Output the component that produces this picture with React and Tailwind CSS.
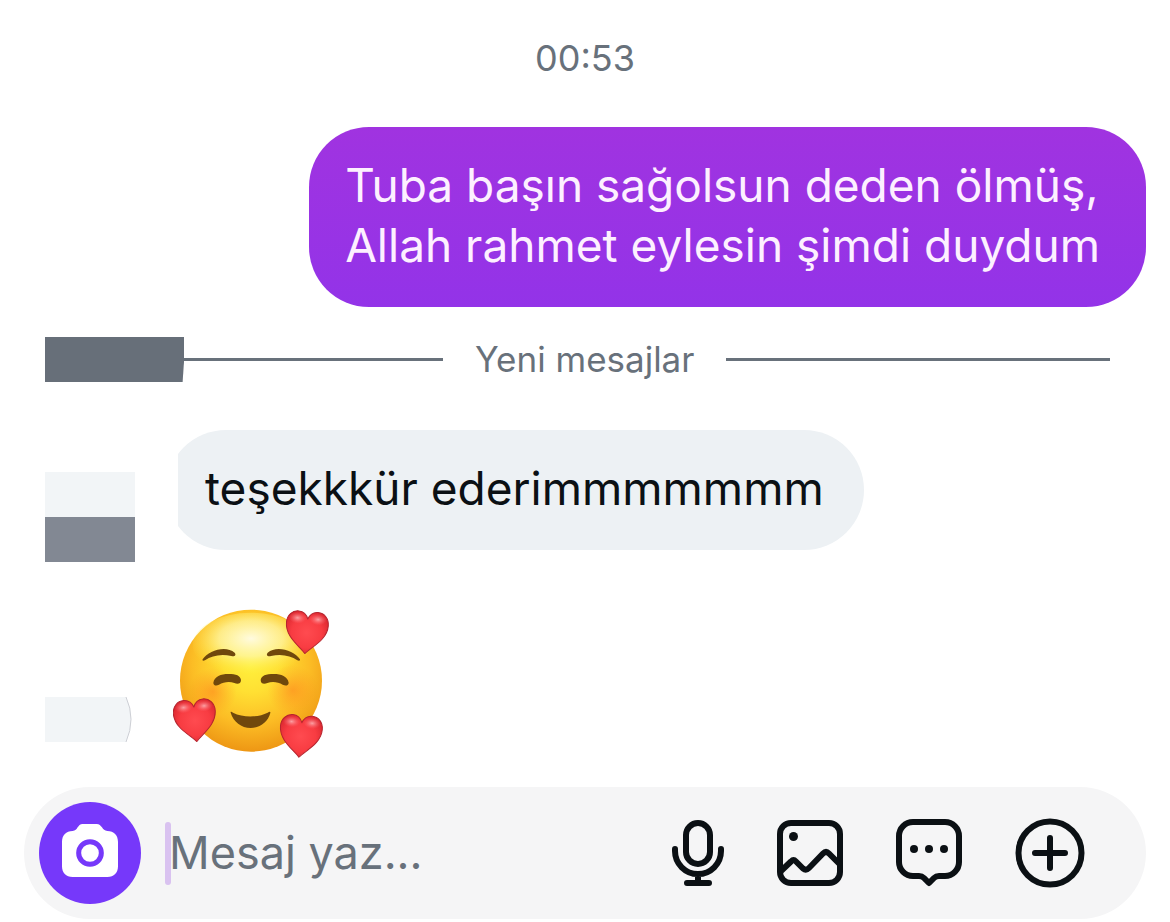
import React, { useState } from 'react';

const Heart = ({ x, y, rotate }) => (
    <g transform={`translate(${x} ${y}) rotate(${rotate} 65 65)`}>
        <path
            d="M65 129C48 108 2 84 2 40C2 18 17 3 36 3C50 3 60 11 65 25C70 11 80 3 94 3C113 3 128 18 128 40C128 84 82 108 65 129Z"
            fill="url(#heart)"
            stroke="#b5242e"
            strokeWidth="3"
            strokeLinejoin="round"
        />
        <ellipse cx="34" cy="24" rx="26" ry="17" fill="url(#heartShine)" />
        <ellipse cx="96" cy="24" rx="26" ry="17" fill="url(#heartShine)" />
    </g>
);

const HeartsEmoji = () => (
    <svg viewBox="39 54 471 453" className="w-[157px] h-[151px]" role="img" aria-label="🥰">
        <defs>
            <radialGradient id="face" gradientUnits="userSpaceOnUse" cx="273" cy="225" r="270">
                <stop offset="0" stopColor="#fff03c" />
                <stop offset="0.3" stopColor="#ffe033" />
                <stop offset="0.65" stopColor="#fcbd25" />
                <stop offset="1" stopColor="#ec9212" />
            </radialGradient>
            <radialGradient id="faceShine" cx="0.5" cy="0.4" r="0.55">
                <stop offset="0" stopColor="#fffce8" stopOpacity="0.95" />
                <stop offset="0.5" stopColor="#fff9b0" stopOpacity="0.7" />
                <stop offset="1" stopColor="#fff04a" stopOpacity="0" />
            </radialGradient>
            <radialGradient id="blush">
                <stop offset="0" stopColor="#ff7a1c" stopOpacity="0.5" />
                <stop offset="1" stopColor="#ff8a1c" stopOpacity="0" />
            </radialGradient>
            <radialGradient id="heart" cx="0.5" cy="0.5" r="0.6">
                <stop offset="0" stopColor="#ff4b50" />
                <stop offset="0.6" stopColor="#f83c42" />
                <stop offset="1" stopColor="#d9272f" />
            </radialGradient>
            <radialGradient id="heartShine">
                <stop offset="0" stopColor="#ffc4c6" stopOpacity="0.75" />
                <stop offset="1" stopColor="#ff7078" stopOpacity="0" />
            </radialGradient>
        </defs>
        <circle cx="273" cy="272" r="213" fill="url(#face)" />
        <ellipse cx="273" cy="165" rx="175" ry="97" fill="url(#faceShine)" />
        <circle cx="158" cy="305" r="72" fill="url(#blush)" />
        <circle cx="398" cy="300" r="76" fill="url(#blush)" />
        <g fill="#70480c">
            <path d="M128 208C145 181 198 165 224 188C230 196 223 201 214 198C180 191 155 198 135 211C129 213 126 212 128 208Z" />
            <path d="M420 208C403 181 349 165 323 188C317 196 324 201 333 198C367 191 392 198 412 211C418 213 421 212 420 208Z" />
            <path d="M160 278C163 259 183 252 205 252C229 252 241 257 243 270C243 283 231 283 223 279C208 273 190 276 177 284C168 289 160 286 160 278Z" />
            <path d="M386 278C383 259 363 252 342 252C317 252 304 257 302 270C302 283 314 283 322 279C337 273 355 276 368 284C378 289 386 286 386 278Z" />
            <path d="M212 368C211 364 215 365 219 368C249 383 293 383 323 368C328 365 332 364 331 369C324 396 300 414 272 414C244 414 220 395 212 368Z" />
        </g>
        <Heart x={375} y={62} rotate={5} />
        <Heart x={40} y={326} rotate={-5} />
        <Heart x={357} y={373} rotate={5} />
    </svg>
);

const CameraIcon = () => (
    <svg viewBox="0 0 168 159" className="w-14 h-[53px]" aria-hidden="true">
        <path
            fill="#fff"
            d="M62 0H104C120 0 120 20 136 21C156 21 168 34 168 53V127C168 147 156 159 136 159H32C12 159 0 147 0 127V53C0 34 12 21 32 21C48 20 46 0 62 0Z"
        />
        <circle cx="84" cy="87" r="34" fill="none" stroke="#7638fa" strokeWidth="15" />
    </svg>
);

const strokeProps = {
    fill: 'none',
    stroke: 'currentColor',
    strokeWidth: 6,
    strokeLinecap: 'round',
    strokeLinejoin: 'round',
    'aria-hidden': true,
};

const MicIcon = () => (
    <svg viewBox="0 0 52 66" className="w-[52px] h-[66px]" {...strokeProps}>
        <rect x="14" y="3" width="24" height="41" rx="12" />
        <path d="M3 29v2a23 23 0 0 0 46 0v-2M26 54v9M15 63h22" />
    </svg>
);

const ImageIcon = () => (
    <svg viewBox="0 0 66 66" className="w-[66px] h-[66px]" {...strokeProps}>
        <rect x="3" y="3" width="60" height="60" rx="11" />
        <circle cx="16.5" cy="16.5" r="4.5" fill="currentColor" stroke="none" />
        <path d="M4 51L14 41.5Q16.500 39 19 41.500L26 48.500Q29 51 32 48L46 33.500Q49 30.500 52 33.500L62 43.500" />
    </svg>
);

const ChatIcon = () => (
    <svg viewBox="0 0 66 68" className="w-[66px] h-[68px]" {...strokeProps}>
        <path d="M17 3H49A14 14 0 0 1 63 17V43A14 14 0 0 1 49 57H43Q40 57 38 59L33 64L28 59Q26 57 23 57H17A14 14 0 0 1 3 43V17A14 14 0 0 1 17 3Z" />
        <g fill="currentColor" stroke="none">
            <circle cx="18" cy="30" r="4" />
            <circle cx="33" cy="30" r="4" />
            <circle cx="48" cy="30" r="4" />
        </g>
    </svg>
);

const PlusIcon = () => (
    <svg viewBox="0 0 70 70" className="w-[70px] h-[70px]" {...strokeProps}>
        <circle cx="35" cy="35" r="31.5" />
        <path d="M35 20v30M20 35h30" />
    </svg>
);

const actions = [
    { label: 'Ses kaydı', Icon: MicIcon },
    { label: 'Fotoğraf', Icon: ImageIcon },
    { label: 'Hızlı yanıt', Icon: ChatIcon },
    { label: 'Ekle', Icon: PlusIcon },
];

const Composer = () => {
    const [text, setText] = useState('');

    return (
        <form
            className="mx-6 mt-7 flex h-[132px] items-center rounded-full bg-[#f5f5f6] pl-[15px] pr-[61px]"
            onSubmit={(e) => e.preventDefault()}
        >
            <button type="button" aria-label="Kamera" className="flex size-[102px] shrink-0 items-center justify-center rounded-full bg-[#7638fa] pb-1.5">
                <CameraIcon />
            </button>
            <span className="ml-6 h-[63px] w-[6px] shrink-0 rounded-full bg-[#d9c2f0]" />
            <input
                type="text"
                aria-label="Mesaj"
                placeholder="Mesaj yaz..."
                value={text}
                onChange={(e) => setText(e.target.value)}
                className="-ml-0.5 min-w-0 flex-1 bg-transparent text-[45px] leading-[60px] text-[#0b1014] outline-none placeholder:text-[#68717b]"
            />
            <div className="flex shrink-0 items-center gap-[53px] text-[#0b1014]">
                {actions.map(({ label, Icon }) => (
                    <button key={label} type="button" aria-label={label}>
                        <Icon />
                    </button>
                ))}
            </div>
        </form>
    );
};

const App = () => (
    <main className="bg-white pt-[34px] font-['Inter','Liberation_Sans',sans-serif] text-[#0b1014]">
        <time className="block text-center text-[36px] leading-[48px] text-[#68717b]">00:53</time>

        <div className="mr-6 mt-[45px] flex justify-end">
            <p className="rounded-[60px] bg-linear-to-b from-[#a033e0] to-[#9333e8] pt-7 pb-8 pl-9 pr-[46px] text-[46px] leading-[60px] text-[#fdf0ff]">
                Tuba başın sağolsun deden ölmüş,
                <br />
                Allah rahmet eylesin şimdi duydum
            </p>
        </div>

        <div className="ml-[45px] mr-[60px] mt-[30px] flex h-[45px] items-center text-[#68717b]">
            <div className="h-[45px] w-[139px] bg-[#676f79] [clip-path:polygon(0_0,100%_0,100%_55%,99%_100%,0_100%)]" />
            <div className="h-[3px] w-[259px] bg-[#68717b]" />
            <span className="px-8 text-[35px] leading-[45px]">Yeni mesajlar</span>
            <div className="h-[3px] flex-1 bg-[#68717b]" />
        </div>

        <div className="ml-[45px] mt-12 flex items-start">
            <div className="mt-[42px] w-[90px]">
                <div className="h-[45px] bg-[#f2f5f7]" />
                <div className="h-[45px] bg-[#828893]" />
            </div>
            <div className="ml-[43px] overflow-hidden">
                <p className="-ml-3 rounded-[60px] bg-[#edf1f4] pt-7 pb-8 pl-[39px] pr-10 text-[46px] leading-[60px]">
                    teşekkkür ederimmmmmmm
                </p>
            </div>
        </div>

        <div className="ml-[45px] mt-[46px] flex items-start">
            <svg viewBox="0 0 90 45" className="mt-[89px] h-[45px] w-[90px]" aria-hidden="true">
                <path d="M0 0H81Q91 22 81 45H0Z" fill="#f2f5f7" />
                <path d="M81 0Q91 22 81 45" fill="none" stroke="#cdcfd5" />
            </svg>
            <div className="ml-[38px]">
                <HeartsEmoji />
            </div>
        </div>

        <Composer />
    </main>
);

export default App;
